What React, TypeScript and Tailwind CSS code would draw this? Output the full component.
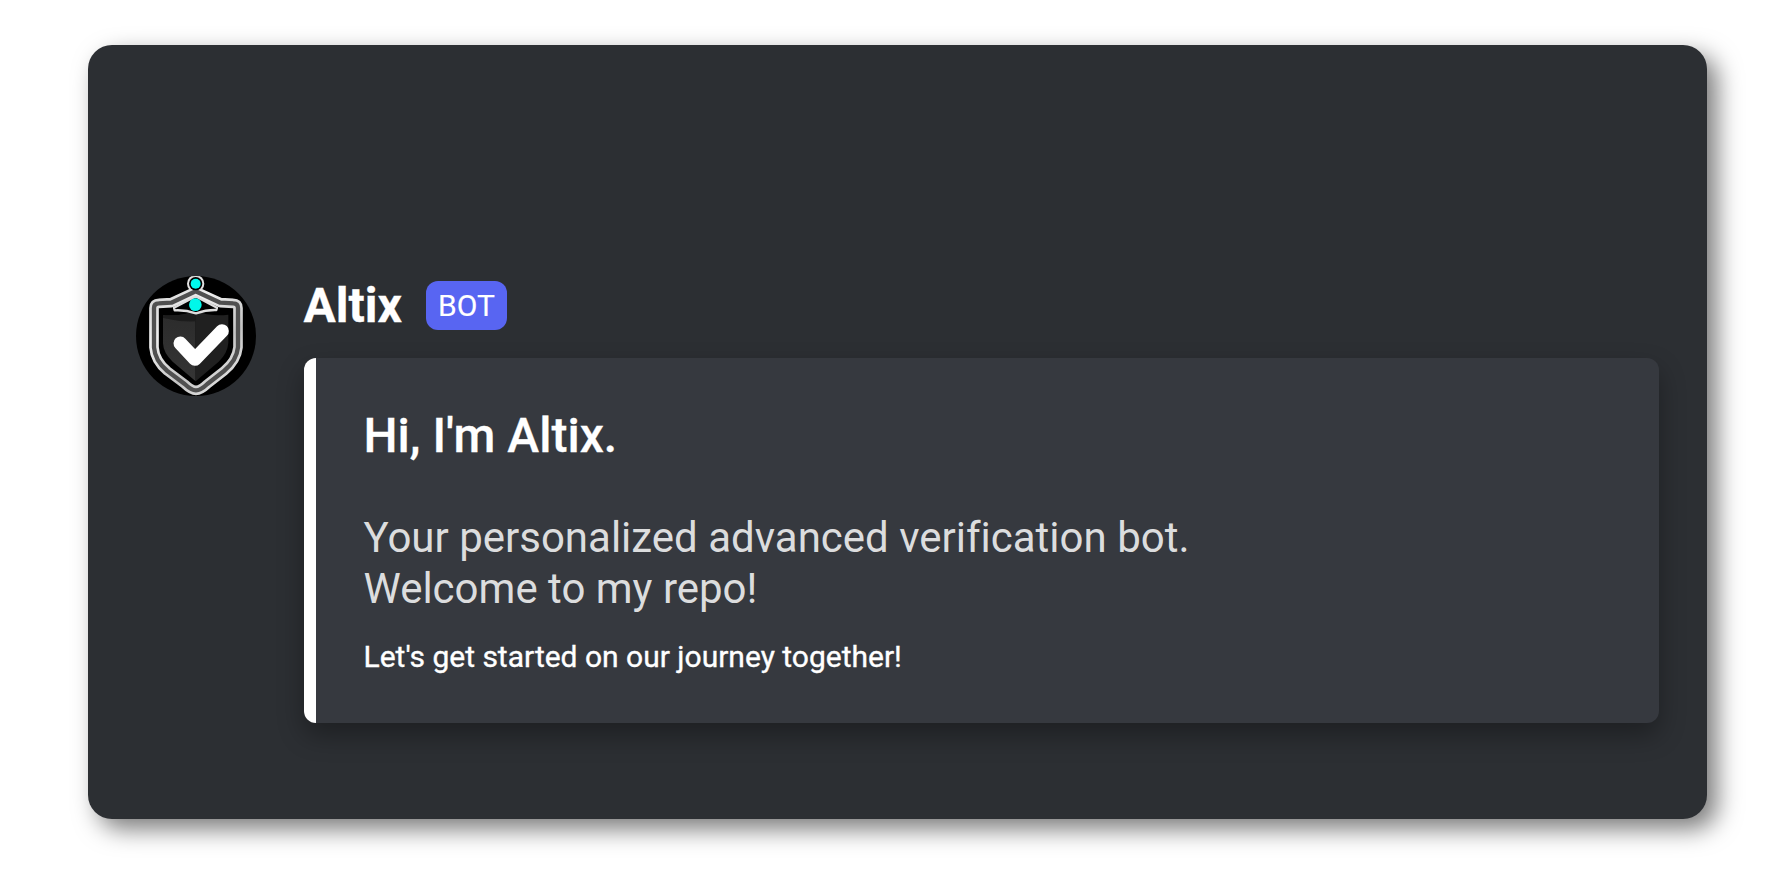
const FRAME =
  "M209 76 L283 110 L322 112 Q336 112 336 126 L336 244 Q332 284 294 315 L244 354 Q224 373 210 373 Q196 373 176 354 L124 315 Q87 284 84 244 L84 126 Q84 112 98 112 L136 110 Z";

function Avatar() {
  return (
    <svg viewBox="30 30 360 360" className="size-[120px] shrink-0" aria-hidden="true">
      <defs>
        <clipPath id="disc">
          <circle cx="210" cy="210" r="180" />
        </clipPath>
        <linearGradient id="silver" gradientUnits="userSpaceOnUse" x1="70" y1="70" x2="340" y2="380">
          <stop offset="0" stopColor="#d0d0d0" />
          <stop offset="0.3" stopColor="#efefef" />
          <stop offset="0.65" stopColor="#c4c4c4" />
          <stop offset="1" stopColor="#ececec" />
        </linearGradient>
        <linearGradient id="plate" x1="0" y1="0" x2="0" y2="1">
          <stop offset="0" stopColor="#2b2b2b" />
          <stop offset="1" stopColor="#353535" />
        </linearGradient>
      </defs>
      <circle cx="210" cy="210" r="180" fill="#000" />
      <g clipPath="url(#disc)">
        <path d={FRAME} fill="#000" stroke="url(#silver)" strokeWidth="29" strokeLinejoin="round" />
        <circle cx="209" cy="53" r="26" fill="#e2e2e2" />
        <path d={FRAME} fill="none" stroke="#505050" strokeWidth="13" strokeLinejoin="round" />
        <path d="M111 148 Q164 152 209 135 L209 346 L140 287 Q112 261 111 232 Z" fill="url(#plate)" />
        <path d="M209 135 Q252 152 307 146 L307 230 Q305 261 278 287 L209 346 Z" fill="#202020" />
        <path d="M111 148 Q164 152 209 135 L209 166 Q160 168 111 156 Z" fill="#1c1c1c" />
        <path
          d="M144 125 L204 94 Q209 91 214 94 L273 125 L271 132 Q242 131 210 142 Q178 131 146 133 Z"
          fill="#000"
          stroke="#dedede"
          strokeWidth="7"
          strokeLinejoin="round"
        />
        <circle cx="209" cy="53" r="20" fill="#000" />
      </g>
      <circle cx="209" cy="53" r="15" fill="#00fbee" />
      <circle cx="208" cy="116" r="19" fill="#00f7ea" />
      <path
        d="M163 232 L207 279 L288 195"
        fill="none"
        stroke="#fff"
        strokeWidth="41"
        strokeLinecap="round"
        strokeLinejoin="round"
      />
    </svg>
  );
}

export default function App() {
  return (
    <div className="h-[896px] w-[1786px] overflow-hidden bg-white pt-[45px] pl-[88px] font-['Roboto',sans-serif] [font-variant-ligatures:none]">
      <main className="flex h-[774px] w-[1619px] items-start gap-12 rounded-3xl bg-[#2c2f33] px-12 pt-[231px] shadow-[10px_10px_24px_rgba(0,0,0,0.52)]">
        <Avatar />
        <div className="flex min-w-0 grow flex-col">
          <header className="flex h-[82px] items-start">
            <h1 className="mt-[1px] -ml-[0.5px] w-[122.5px] text-[48px] leading-[58px] font-bold text-white [-webkit-text-stroke:0.3px_white]">Altix</h1>
            <span className="mt-[5px] flex h-[49px] w-[81px] items-center justify-center rounded-xl bg-[#5865f2] text-[30px] leading-[49px] text-white [-webkit-text-stroke:0.15px_white]">
              BOT
            </span>
          </header>
          <section className="h-[365px] rounded-xl border-l-[12px] border-white bg-[#36393f] pt-[49px] pl-[47.5px] shadow-[0_12px_27px_rgba(0,0,0,0.33)]">
            <h2 className="text-[48px] leading-[58px] font-medium text-white [-webkit-text-stroke:0.3px_white]">Hi, I'm Altix.</h2>
            <p className="mt-[47px] text-[42px] leading-[51px] text-[#dcddde]">
              Your personalized advanced verification bot.
              <br />
              Welcome to my repo!
            </p>
            <p className="mt-[25px] text-[30px] leading-[36px] text-white [-webkit-text-stroke:0.35px_white]">
              Let's get started on our journey together!
            </p>
          </section>
        </div>
      </main>
    </div>
  );
}
